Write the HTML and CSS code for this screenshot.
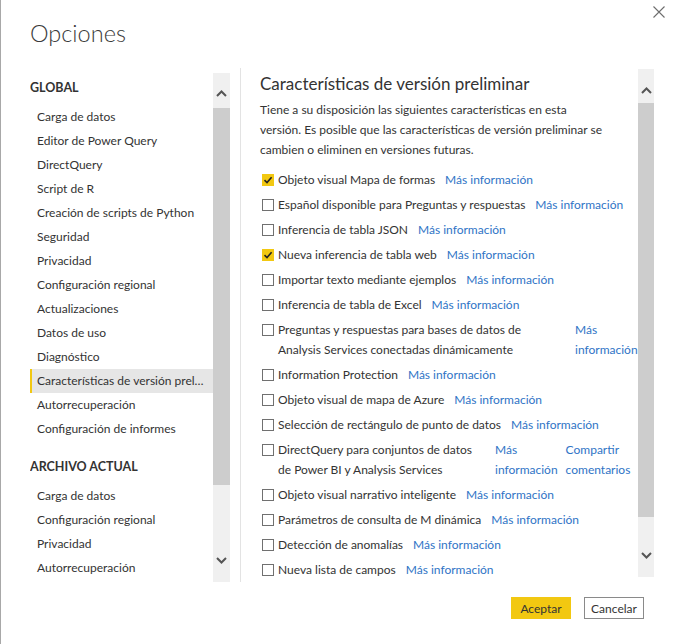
FILE: index.html
```html
<!DOCTYPE html>
<html lang="es">
<head>
<meta charset="utf-8">
<title>Opciones</title>
<link rel="stylesheet" href="styles.css">
</head>
<body>
<div class="dialog">
  <header class="dlg-head">
    <h1 class="title">Opciones</h1>
    <button class="close" aria-label="Cerrar">
      <svg width="12" height="12" viewBox="0 0 12 12"><path d="M0.5 0.5 L11.5 11.5 M11.5 0.5 L0.5 11.5" stroke="#6d6d6d" stroke-width="1.1" fill="none"/></svg>
    </button>
  </header>

  <div class="dlg-body">
    <aside class="side">
      <nav class="nav">
        <div class="nav-head">GLOBAL</div>
        <div class="nav-item">Carga de datos</div>
        <div class="nav-item">Editor de Power Query</div>
        <div class="nav-item">DirectQuery</div>
        <div class="nav-item">Script de R</div>
        <div class="nav-item">Creación de scripts de Python</div>
        <div class="nav-item">Seguridad</div>
        <div class="nav-item">Privacidad</div>
        <div class="nav-item">Configuración regional</div>
        <div class="nav-item">Actualizaciones</div>
        <div class="nav-item">Datos de uso</div>
        <div class="nav-item">Diagnóstico</div>
        <div class="nav-item is-active">Características de versión preliminar</div>
        <div class="nav-item">Autorrecuperación</div>
        <div class="nav-item">Configuración de informes</div>
        <div class="nav-head nav-head-2">ARCHIVO ACTUAL</div>
        <div class="nav-item">Carga de datos</div>
        <div class="nav-item">Configuración regional</div>
        <div class="nav-item">Privacidad</div>
        <div class="nav-item">Autorrecuperación</div>
      </nav>
      <div class="sb sb-left">
        <div class="sb-btn sb-up"><svg width="11" height="7" viewBox="0 0 11 7"><path d="M1 6 L5.5 1.5 L10 6" stroke="#555" stroke-width="2" fill="none"/></svg></div>
        <div class="sb-thumb"></div>
        <div class="sb-space"></div>
        <div class="sb-btn sb-down"><svg width="11" height="7" viewBox="0 0 11 7"><path d="M1 1 L5.5 5.5 L10 1" stroke="#555" stroke-width="2" fill="none"/></svg></div>
      </div>
    </aside>

    <div class="divider"></div>

    <section class="content">
      <div class="content-inner">
        <h2 class="heading">Características de versión preliminar</h2>
        <p class="intro">Tiene a su disposición las siguientes características en esta versión. Es posible que las características de versión preliminar se cambien o eliminen en versiones futuras.</p>
        <div class="opts">
          <div class="opt"><span class="cb is-on"><svg width="10" height="10" viewBox="0 0 10 10"><path d="M1.5 5.2 L4 7.6 L8.6 2.2" stroke="#222" stroke-width="1.6" fill="none"/></svg></span><span class="label">Objeto visual Mapa de formas</span><a class="link">Más información</a></div>
          <div class="opt"><span class="cb"></span><span class="label">Español disponible para Preguntas y respuestas</span><a class="link">Más información</a></div>
          <div class="opt"><span class="cb"></span><span class="label">Inferencia de tabla JSON</span><a class="link">Más información</a></div>
          <div class="opt"><span class="cb is-on"><svg width="10" height="10" viewBox="0 0 10 10"><path d="M1.5 5.2 L4 7.6 L8.6 2.2" stroke="#222" stroke-width="1.6" fill="none"/></svg></span><span class="label">Nueva inferencia de tabla web</span><a class="link">Más información</a></div>
          <div class="opt"><span class="cb"></span><span class="label">Importar texto mediante ejemplos</span><a class="link">Más información</a></div>
          <div class="opt"><span class="cb"></span><span class="label">Inferencia de tabla de Excel</span><a class="link">Más información</a></div>
          <div class="opt"><span class="cb"></span><span class="label label-qa">Preguntas y respuestas para bases de datos de Analysis Services conectadas dinámicamente</span><a class="link link-wrap">Más información</a></div>
          <div class="opt"><span class="cb"></span><span class="label">Information Protection</span><a class="link">Más información</a></div>
          <div class="opt"><span class="cb"></span><span class="label">Objeto visual de mapa de Azure</span><a class="link">Más información</a></div>
          <div class="opt"><span class="cb"></span><span class="label">Selección de rectángulo de punto de datos</span><a class="link">Más información</a></div>
          <div class="opt"><span class="cb"></span><span class="label label-dq">DirectQuery para conjuntos de datos de Power BI y Analysis Services</span><a class="link link-wrap">Más información</a><a class="link link-wrap link-2">Compartir comentarios</a></div>
          <div class="opt"><span class="cb"></span><span class="label">Objeto visual narrativo inteligente</span><a class="link">Más información</a></div>
          <div class="opt"><span class="cb"></span><span class="label">Parámetros de consulta de M dinámica</span><a class="link">Más información</a></div>
          <div class="opt"><span class="cb"></span><span class="label">Detección de anomalías</span><a class="link">Más información</a></div>
          <div class="opt"><span class="cb"></span><span class="label">Nueva lista de campos</span><a class="link">Más información</a></div>
        </div>
      </div>
      <div class="sb sb-right">
        <div class="sb-btn sb-up"><svg width="11" height="7" viewBox="0 0 11 7"><path d="M1 6 L5.5 1.5 L10 6" stroke="#555" stroke-width="2" fill="none"/></svg></div>
        <div class="sb-thumb"></div>
        <div class="sb-space"></div>
        <div class="sb-btn sb-down"><svg width="11" height="7" viewBox="0 0 11 7"><path d="M1 1 L5.5 5.5 L10 1" stroke="#555" stroke-width="2" fill="none"/></svg></div>
      </div>
    </section>
  </div>

  <footer class="dlg-foot">
    <button class="btn btn-primary">Aceptar</button>
    <button class="btn btn-secondary">Cancelar</button>
  </footer>
</div>
</body>
</html>
```

FILE: styles.css
```css
* { box-sizing: border-box; }

html, body {
  margin: 0;
  padding: 0;
  background: #ffffff;
}

body {
  font-family: "Lato", "Open Sans", sans-serif;
  color: #333333;
  width: 674px;
  height: 644px;
  overflow: hidden;
}

.dialog {
  width: 674px;
  height: 644px;
  border-left: 1px solid #a8a8a8;
  display: flex;
  flex-direction: column;
}

/* header */
.dlg-head {
  height: 68px;
  flex: none;
  display: flex;
  justify-content: space-between;
  align-items: flex-start;
  padding-left: 29px;
}

.title {
  margin: 17px 0 0 0;
  font-size: 23.5px;
  line-height: 32px;
  font-weight: 300;
  color: #3b3b3b;
}

.close {
  margin: 6px 9px 0 0;
  padding: 0;
  border: 0;
  background: none;
  width: 12px;
  height: 12px;
  display: flex;
}

/* body */
.dlg-body {
  height: 514px;
  flex: none;
  display: flex;
  padding-left: 29px;
}

.side {
  display: flex;
  margin-top: 5px;
  height: 509px;
  margin-right: 10px;
}

.nav {
  width: 183px;
  overflow: hidden;
}

.nav-head {
  font-size: 12.5px;
  font-weight: 700;
  line-height: 30px;
  height: 30px;
  margin-bottom: 2px;
  color: #333;
}

.nav-head-2 {
  margin-top: 11px;
}

.nav-item {
  font-size: 12px;
  line-height: 24px;
  height: 24px;
  border-left: 2px solid transparent;
  padding: 0 8px 0 5px;
  white-space: nowrap;
  overflow: hidden;
  text-overflow: ellipsis;
  color: #333;
}

.nav-item.is-active {
  background: #e6e6e6;
  border-left-color: #f2c811;
}

/* scrollbars */
.sb {
  display: flex;
  flex-direction: column;
  background: #f0f0f0;
  flex: none;
}

.sb-left {
  width: 17px;
  height: 509px;
}

.sb-right {
  width: 16px;
  height: 508px;
  margin-top: 1px;
}

.sb-btn {
  display: flex;
  justify-content: center;
  flex: none;
}

.sb-left .sb-btn { height: 35px; }
.sb-left .sb-up { padding-top: 17px; }
.sb-left .sb-down { padding-top: 10px; }
.sb-left .sb-thumb { height: 377px; }

.sb-right .sb-btn { height: 34px; }
.sb-right .sb-up { padding-top: 18px; }
.sb-right .sb-down { padding-top: 9px; }
.sb-right .sb-thumb { height: 414px; }

.sb-thumb {
  background: #cdcdcd;
  flex: none;
}

.sb-space { flex: 1; }

.divider {
  width: 1px;
  background: #e3e3e3;
  height: 514px;
  flex: none;
}

/* content */
.content {
  display: flex;
  width: 413px;
  height: 514px;
}

.content-inner {
  width: 397px;
  padding: 4px 0 0 19px;
  overflow: hidden;
}

.heading {
  margin: 0 0 4px 0;
  font-size: 17px;
  line-height: 24px;
  font-weight: 400;
  color: #333;
}

.intro {
  margin: 0;
  width: 350px;
  font-size: 12px;
  line-height: 20px;
  color: #333;
}

.opts {
  margin-top: 7.5px;
}

.opt {
  display: flex;
  align-items: flex-start;
  padding: 2.5px 0;
  font-size: 12px;
  line-height: 20px;
  white-space: nowrap;
}

.cb {
  flex: none;
  width: 12px;
  height: 12px;
  margin: 4px 4px 0 2px;
  border: 1px solid #707070;
  background: #fff;
  display: flex;
  align-items: center;
  justify-content: center;
}

.cb.is-on {
  background: #f2c811;
  border-color: #f2c811;
}

.label {
  color: #333;
  flex: none;
}

.label-qa {
  width: 287px;
  white-space: normal;
}

.label-dq {
  width: 207px;
  white-space: normal;
}

.link {
  flex: none;
  margin-left: 10px;
  color: #2f74c6;
  cursor: pointer;
}

.link-wrap {
  white-space: normal;
  width: min-content;
}

.link-2 {
  margin-left: 8px;
}

/* footer */
.dlg-foot {
  display: flex;
  justify-content: flex-end;
  gap: 13px;
  padding: 15px 30px 0 0;
}

.btn {
  width: 60px;
  height: 22px;
  padding: 0;
  font-family: "Lato", "Open Sans", sans-serif;
  font-size: 12px;
  color: #333;
  cursor: pointer;
}

.btn-primary {
  background: #f2c811;
  border: 1px solid #f2c811;
}

.btn-secondary {
  background: #fff;
  border: 1px solid #8a8a8a;
}
```
